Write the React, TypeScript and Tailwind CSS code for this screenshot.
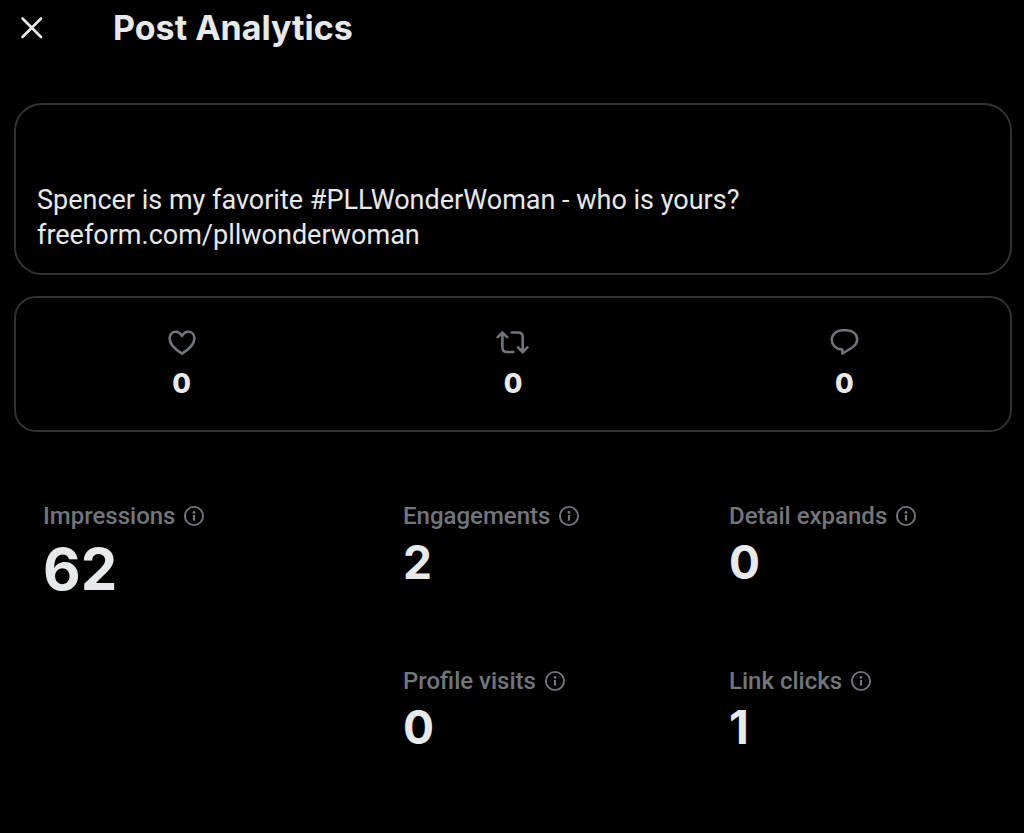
import type { ReactNode } from 'react'

interface MetricProps {
    label: string
    value: number
    large?: boolean
}

function InfoIcon() {
    return (
        <svg viewBox="0 0 22 22" className="h-[22px] w-[22px]" fill="none" aria-hidden="true">
            <circle cx="11" cy="11" r="9.1" stroke="currentColor" strokeWidth="1.9" />
            <circle cx="11" cy="7.4" r="1.4" fill="currentColor" />
            <path d="M11 10v5.6" stroke="currentColor" strokeWidth="2.2" />
        </svg>
    )
}

function HeartIcon() {
    return (
        <svg viewBox="0 0 32 32" className="h-8 w-8" fill="none" stroke="currentColor" strokeWidth="2.6" strokeLinejoin="round" aria-hidden="true">
            <path d="M16 27.6C11.1 24.5 3.6 19.2 3.6 12.4C3.6 8.5 6.3 5.8 9.6 5.8C12.3 5.8 14.6 7.3 16 10C17.4 7.3 19.7 5.8 22.4 5.8C25.7 5.8 28.4 8.5 28.4 12.4C28.4 19.2 20.9 24.5 16 27.6Z" />
        </svg>
    )
}

function RepostIcon() {
    return (
        <svg viewBox="0 0 33 32" className="h-8 w-[33px]" fill="none" stroke="currentColor" strokeWidth="2.6" strokeLinecap="round" aria-hidden="true">
            <path d="M1.7 11.2L6.4 6.5L11.1 11.2M6.4 6.8V21.5C6.4 24.3 8.2 26 11 26H17.3" />
            <path d="M15.7 6.5H22.1C24.9 6.5 26.7 8.2 26.7 11V25.8M22 21.4L26.7 26.1L31.4 21.4" />
        </svg>
    )
}

function ReplyIcon() {
    return (
        <svg viewBox="0 0 32 32" className="h-8 w-8" fill="none" stroke="currentColor" strokeWidth="2.5" strokeLinejoin="round" aria-hidden="true">
            <path d="M14.4 23.5H13.4C7.8 23.1 3.8 18.8 3.8 13.8C3.8 8.4 8.5 4.3 14.5 4.3H18.5C24.5 4.3 29.2 8.2 29.2 13.3C29.2 17 27 19.8 23.5 22C20.5 23.9 17.5 25.8 14.4 27.6V23.5Z" />
        </svg>
    )
}

function Count({ icon, label, value }: { icon: ReactNode; label: string; value: number }) {
    return (
        <button type="button" aria-label={label} className="flex flex-col items-center gap-2 text-[#71767b]">
            {icon}
            <span className="font-['Inter',sans-serif] text-[27px] leading-9 font-extrabold text-[#e7e9ea]">{value}</span>
        </button>
    )
}

function Metric({ label, value, large }: MetricProps) {
    return (
        <div className="flex flex-col gap-px">
            <div className="flex items-center gap-2 text-[#71767b]">
                <h2 className="text-[24px] leading-8 font-medium">{label}</h2>
                <button type="button" aria-label={`About ${label}`}>
                    <InfoIcon />
                </button>
            </div>
            <p className={large ? "font-['Inter',sans-serif] text-[58px] leading-[72px] font-bold" : "font-['Inter',sans-serif] text-[46px] leading-[58px] font-bold"}>
                {value}
            </p>
        </div>
    )
}

export default function App() {
    return (
        <main className="min-h-screen bg-black font-['Roboto',sans-serif] text-[#e7e9ea]">
            <header className="flex h-14 items-center gap-[67px] px-[18px]">
                <button type="button" aria-label="Close">
                    <svg viewBox="0 0 28 28" className="h-7 w-7" fill="none" stroke="currentColor" strokeWidth="2.6" strokeLinecap="round" aria-hidden="true">
                        <path d="M4.5 4.5L23 23M23 4.5L4.5 23" />
                    </svg>
                </button>
                <h1 className="font-['Inter',sans-serif] text-[34px] leading-10 font-bold">Post Analytics</h1>
            </header>

            {/* Post preview */}
            <section className="mr-3 ml-[14px] mt-[47px] rounded-[28px] border-2 border-[#2f3336] px-[21px] pt-[78px] pb-5 text-[27px] leading-[35px]">
                <p>Spencer is my favorite #PLLWonderWoman - who is yours?</p>
                <p>freeform.com/pllwonderwoman</p>
            </section>

            {/* Likes, reposts and replies */}
            <section className="mr-3 ml-[14px] mt-[21px] grid grid-cols-3 justify-items-center rounded-[22px] border-2 border-[#2f3336] pt-7 pb-7">
                <Count icon={<HeartIcon />} label="Likes" value={0} />
                <Count icon={<RepostIcon />} label="Reposts" value={0} />
                <Count icon={<ReplyIcon />} label="Replies" value={0} />
            </section>

            <section className="grid grid-cols-[360fr_621fr] pt-[68px] pb-16 pl-[43px]">
                <Metric label="Impressions" value={62} large />
                <div className="grid grid-cols-[326fr_295fr] gap-y-[74px]">
                    <Metric label="Engagements" value={2} />
                    <Metric label="Detail expands" value={0} />
                    <Metric label="Profile visits" value={0} />
                    <Metric label="Link clicks" value={1} />
                </div>
            </section>
        </main>
    )
}
